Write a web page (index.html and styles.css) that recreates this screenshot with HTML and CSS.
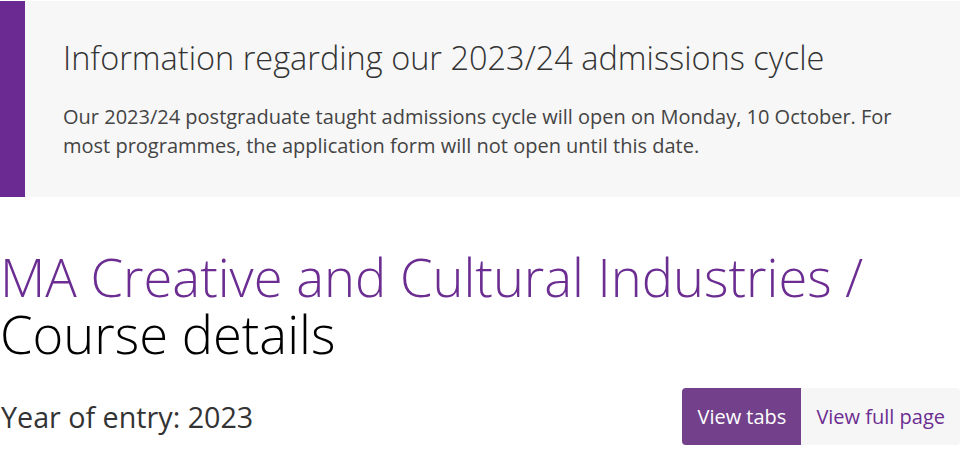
FILE: index.html
```html
<!DOCTYPE html>
<html lang="en">
<head>
<meta charset="utf-8">
<title>MA Creative and Cultural Industries</title>
<link rel="stylesheet" href="styles.css">
</head>
<body>
<div class="page">
  <aside class="notice">
    <h2 class="notice-title">Information regarding our 2023/24 admissions cycle</h2>
    <p class="notice-text">Our 2023/24 postgraduate taught admissions cycle will open on Monday, 10 October. For most programmes, the application form will not open until this date.</p>
  </aside>
  <h1 class="course-title"><span class="course-name">MA Creative and Cultural Industries /</span><br>Course details</h1>
  <div class="entry-row">
    <p class="entry-year">Year of entry: 2023</p>
    <div class="view-toggle">
      <a class="toggle-btn active" href="#">View tabs</a>
      <a class="toggle-btn" href="#">View full page</a>
    </div>
  </div>
</div>
</body>
</html>
```

FILE: styles.css
```css
* { box-sizing: border-box; }
html, body { margin: 0; padding: 0; background: #fff; }
body { font-family: "Open Sans", "Noto Sans", sans-serif; color: #333; }
.page { width: 960px; }
.notice {
  margin-top: 1px;
  background: #f7f7f7;
  border-left: 25px solid #6a2a91;
  padding: 35px 38px 0;
  height: 196px;
}
.notice-title {
  margin: 0;
  font-weight: 300;
  font-size: 32.5px;
  line-height: 44px;
  color: #333;
}
.notice-text {
  margin: 22px 0 0;
  font-size: 20px;
  line-height: 29px;
  color: #444;
}
.course-title {
  margin: 51px 0 0;
  font-weight: 300;
  font-size: 52.5px;
  line-height: 57px;
  color: #000;
}
.course-name { color: #6b2d91; }
.entry-row {
  display: flex;
  justify-content: space-between;
  align-items: center;
  margin-top: 26px;
}
.entry-year {
  margin: 0 0 0 1px;
  font-size: 28.7px;
  font-weight: 400;
  color: #333;
}
.view-toggle { display: flex; }
.toggle-btn {
  display: block;
  height: 57px;
  line-height: 57px;
  padding: 0 15px;
  font-size: 20px;
  text-decoration: none;
  background: #f6f6f6;
  color: #6b2d91;
  border-radius: 0 4px 4px 0;
}
.toggle-btn.active {
  background: #73418b;
  color: #fff;
  font-weight: 500;
  border-radius: 4px 0 0 4px;
}
```
